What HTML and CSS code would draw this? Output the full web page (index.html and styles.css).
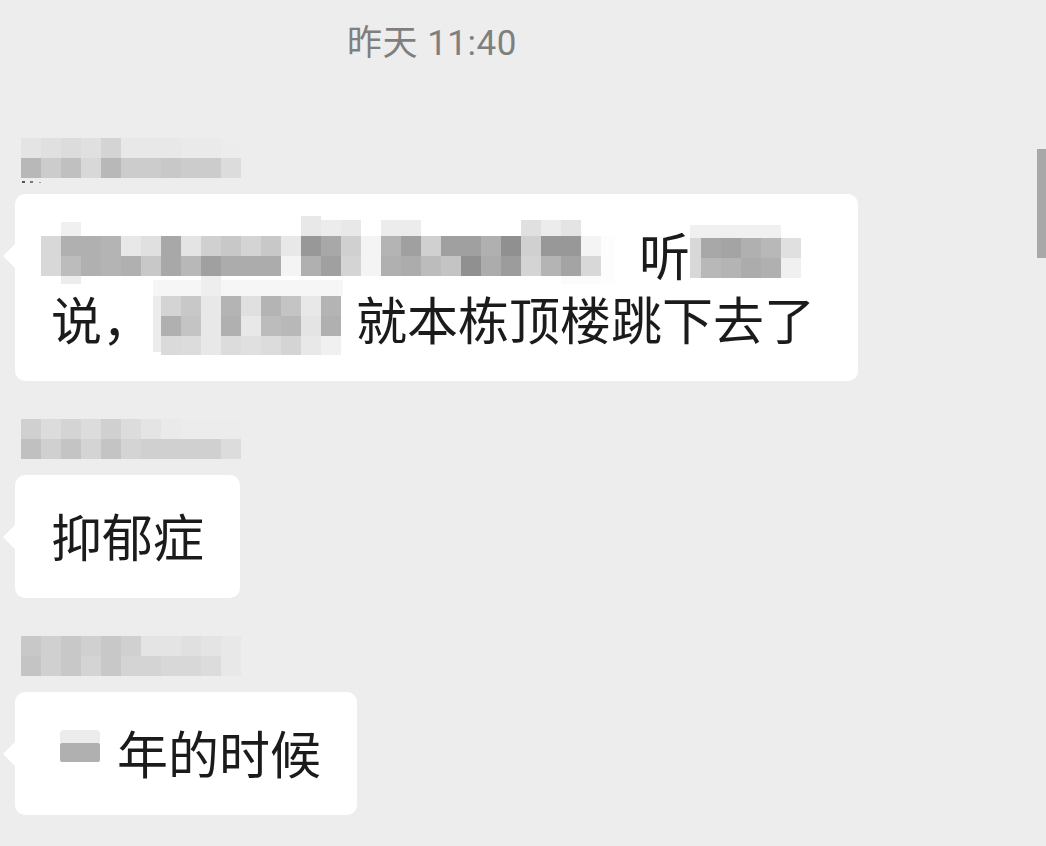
FILE: index.html
```html
<!DOCTYPE html>
<html lang="zh-CN">
<head>
<meta charset="utf-8">
<title>聊天记录</title>
<link rel="stylesheet" href="styles.css">
</head>
<body>
<div class="chat">
  <div class="time">昨天 11:40</div>

  <div class="msg">
    <svg class="name" width="220" height="46" viewBox="0 0 220 46">
      <rect x="0" y="0" width="20" height="20" fill="#e4e4e4"/><rect x="20" y="0" width="20" height="20" fill="#e0e0e0"/><rect x="40" y="0" width="20" height="20" fill="#dcdcdc"/><rect x="60" y="0" width="20" height="20" fill="#e0e0e0"/><rect x="80" y="0" width="20" height="20" fill="#d4d4d4"/><rect x="100" y="0" width="20" height="20" fill="#e8e8e8"/><rect x="120" y="0" width="20" height="20" fill="#e8e8e8"/><rect x="140" y="0" width="20" height="20" fill="#e8e8e8"/><rect x="160" y="0" width="20" height="20" fill="#eaeaea"/><rect x="180" y="0" width="20" height="20" fill="#eaeaea"/><rect x="200" y="0" width="20" height="20" fill="#ececec"/>
      <rect x="0" y="20" width="20" height="20" fill="#b8b8b8"/><rect x="20" y="20" width="20" height="20" fill="#cccccc"/><rect x="40" y="20" width="20" height="20" fill="#c0c0c0"/><rect x="60" y="20" width="20" height="20" fill="#d8d8d8"/><rect x="80" y="20" width="20" height="20" fill="#b8b8b8"/><rect x="100" y="20" width="20" height="20" fill="#cccccc"/><rect x="120" y="20" width="20" height="20" fill="#cccccc"/><rect x="140" y="20" width="20" height="20" fill="#c8c8c8"/><rect x="160" y="20" width="20" height="20" fill="#cccccc"/><rect x="180" y="20" width="20" height="20" fill="#cccccc"/><rect x="200" y="20" width="20" height="20" fill="#dcdcdc"/>
      <rect x="1" y="43" width="3" height="2" fill="#555"/><rect x="9" y="43" width="3" height="2" fill="#777"/><rect x="18" y="44" width="2" height="1" fill="#999"/>
    </svg>
    <div class="bubble long">
      <svg class="mz mz-a" width="574" height="68" viewBox="0 0 574 68">
        <rect x="20" y="6" width="20" height="14" fill="#f0f0f0"/><rect x="260" y="0" width="20" height="20" fill="#e8e8e8"/><rect x="280" y="4" width="20" height="16" fill="#ececec"/><rect x="300" y="4" width="20" height="16" fill="#e8e8e8"/><rect x="340" y="4" width="40" height="16" fill="#ececec"/><rect x="480" y="4" width="20" height="16" fill="#e0e0e0"/><rect x="500" y="4" width="20" height="16" fill="#ececec"/><rect x="520" y="4" width="20" height="16" fill="#e4e4e4"/>
        <rect x="0" y="20" width="20" height="20" fill="#d8d8d8"/><rect x="20" y="20" width="20" height="20" fill="#b0b0b0"/><rect x="40" y="20" width="20" height="20" fill="#b0b0b0"/><rect x="60" y="20" width="20" height="20" fill="#b4b4b4"/><rect x="80" y="20" width="20" height="20" fill="#e8e8e8"/><rect x="100" y="20" width="20" height="20" fill="#e0e0e0"/><rect x="120" y="20" width="20" height="20" fill="#a8a8a8"/><rect x="140" y="20" width="20" height="20" fill="#e4e4e4"/><rect x="160" y="20" width="20" height="20" fill="#d0d0d0"/><rect x="180" y="20" width="20" height="20" fill="#c8c8c8"/><rect x="200" y="20" width="20" height="20" fill="#d4d4d4"/><rect x="220" y="20" width="20" height="20" fill="#c8c8c8"/><rect x="240" y="20" width="20" height="20" fill="#e8e8e8"/><rect x="260" y="20" width="20" height="20" fill="#989898"/><rect x="280" y="20" width="20" height="20" fill="#a8a8a8"/><rect x="300" y="20" width="20" height="20" fill="#d0d0d0"/><rect x="320" y="20" width="20" height="20" fill="#f4f4f4"/><rect x="340" y="20" width="20" height="20" fill="#b4b4b4"/><rect x="360" y="20" width="20" height="20" fill="#a0a0a0"/><rect x="380" y="20" width="20" height="20" fill="#d0d0d0"/><rect x="400" y="20" width="20" height="20" fill="#a0a0a0"/><rect x="420" y="20" width="20" height="20" fill="#a0a0a0"/><rect x="440" y="20" width="20" height="20" fill="#b0b0b0"/><rect x="460" y="20" width="20" height="20" fill="#909090"/><rect x="480" y="20" width="20" height="20" fill="#d0d0d0"/><rect x="500" y="20" width="20" height="20" fill="#989898"/><rect x="520" y="20" width="20" height="20" fill="#989898"/><rect x="540" y="20" width="20" height="20" fill="#f4f4f4"/>
        <rect x="0" y="40" width="20" height="20" fill="#d8d8d8"/><rect x="20" y="40" width="20" height="20" fill="#bcbcbc"/><rect x="40" y="40" width="20" height="20" fill="#b0b0b0"/><rect x="60" y="40" width="20" height="20" fill="#b4b4b4"/><rect x="80" y="40" width="20" height="20" fill="#b0b0b0"/><rect x="100" y="40" width="20" height="20" fill="#c8c8c8"/><rect x="120" y="40" width="20" height="20" fill="#a8a8a8"/><rect x="140" y="40" width="20" height="20" fill="#b8b8b8"/><rect x="160" y="40" width="20" height="20" fill="#a0a0a0"/><rect x="180" y="40" width="20" height="20" fill="#acacac"/><rect x="200" y="40" width="20" height="20" fill="#acacac"/><rect x="220" y="40" width="20" height="20" fill="#acacac"/><rect x="240" y="40" width="20" height="20" fill="#f4f4f4"/><rect x="260" y="40" width="20" height="20" fill="#b0b0b0"/><rect x="280" y="40" width="20" height="20" fill="#a0a0a0"/><rect x="300" y="40" width="20" height="20" fill="#d4d4d4"/><rect x="320" y="40" width="20" height="20" fill="#f4f4f4"/><rect x="340" y="40" width="20" height="20" fill="#b0b0b0"/><rect x="360" y="40" width="20" height="20" fill="#acacac"/><rect x="380" y="40" width="20" height="20" fill="#bcbcbc"/><rect x="400" y="40" width="20" height="20" fill="#c4c4c4"/><rect x="420" y="40" width="20" height="20" fill="#909090"/><rect x="440" y="40" width="20" height="20" fill="#acacac"/><rect x="460" y="40" width="20" height="20" fill="#9c9c9c"/><rect x="480" y="40" width="20" height="20" fill="#d4d4d4"/><rect x="500" y="40" width="20" height="20" fill="#b4b4b4"/><rect x="520" y="40" width="20" height="20" fill="#a4a4a4"/><rect x="540" y="40" width="20" height="20" fill="#d8d8d8"/>
        <rect x="560" y="20" width="14" height="48" fill="#fdfdfd"/>
        <rect x="20" y="60" width="20" height="8" fill="#ececec"/><rect x="520" y="60" width="40" height="8" fill="#fbfbfb"/>
      </svg>，听<svg class="mz mz-b" width="113" height="53" viewBox="0 0 113 53">
        <rect x="0" y="0" width="91" height="13" fill="#f0f0f0"/>
        <rect x="0" y="13" width="11" height="40" fill="#d8d8d8"/>
        <rect x="11" y="13" width="20" height="20" fill="#a8a8a8"/><rect x="31" y="13" width="20" height="20" fill="#a4a4a4"/><rect x="51" y="13" width="20" height="20" fill="#b0b0b0"/><rect x="71" y="13" width="20" height="20" fill="#b8b8b8"/><rect x="91" y="13" width="20" height="20" fill="#e0e0e0"/>
        <rect x="11" y="33" width="20" height="20" fill="#b8b8b8"/><rect x="31" y="33" width="20" height="20" fill="#b4b4b4"/><rect x="51" y="33" width="20" height="20" fill="#acacac"/><rect x="71" y="33" width="20" height="20" fill="#b0b0b0"/><rect x="91" y="33" width="20" height="20" fill="#f0f0f0"/>
      </svg><br>说，<svg class="mz mz-c" width="203" height="80" viewBox="0 0 203 80">
        <rect x="0" y="4" width="190" height="16" fill="#f6f6f6"/><rect x="48" y="0" width="20" height="20" fill="#eeeeee"/>
        <rect x="0" y="20" width="8" height="56" fill="#ececec"/>
        <rect x="8" y="20" width="20" height="20" fill="#d4d4d4"/><rect x="28" y="20" width="20" height="20" fill="#c8c8c8"/><rect x="48" y="20" width="20" height="20" fill="#e8e8e8"/><rect x="68" y="20" width="20" height="20" fill="#b4b4b4"/><rect x="88" y="20" width="20" height="20" fill="#e0e0e0"/><rect x="108" y="20" width="20" height="20" fill="#b4b4b4"/><rect x="128" y="20" width="20" height="20" fill="#c4c4c4"/><rect x="148" y="20" width="20" height="20" fill="#e8e8e8"/><rect x="168" y="20" width="20" height="20" fill="#b4b4b4"/>
        <rect x="8" y="40" width="20" height="20" fill="#b0b0b0"/><rect x="28" y="40" width="20" height="20" fill="#c4c4c4"/><rect x="48" y="40" width="20" height="20" fill="#e8e8e8"/><rect x="68" y="40" width="20" height="20" fill="#b0b0b0"/><rect x="88" y="40" width="20" height="20" fill="#e8e8e8"/><rect x="108" y="40" width="20" height="20" fill="#bcbcbc"/><rect x="128" y="40" width="20" height="20" fill="#b8b8b8"/><rect x="148" y="40" width="20" height="20" fill="#e4e4e4"/><rect x="168" y="40" width="20" height="20" fill="#b0b0b0"/>
        <rect x="8" y="60" width="20" height="19" fill="#dadada"/><rect x="28" y="60" width="20" height="19" fill="#dcdcdc"/><rect x="48" y="60" width="20" height="19" fill="#e8e8e8"/><rect x="68" y="60" width="20" height="19" fill="#dcdcdc"/><rect x="88" y="60" width="20" height="19" fill="#e0e0e0"/><rect x="108" y="60" width="20" height="19" fill="#dcdcdc"/><rect x="128" y="60" width="20" height="19" fill="#d4d4d4"/><rect x="148" y="60" width="20" height="19" fill="#e8e8e8"/><rect x="168" y="60" width="20" height="19" fill="#f0f0f0"/>
      </svg>就本栋顶楼跳下去了
    </div>
  </div>

  <div class="msg">
    <svg class="name" width="220" height="40" viewBox="0 0 220 40">
      <rect x="0" y="0" width="20" height="20" fill="#d0d0d0"/><rect x="20" y="0" width="20" height="20" fill="#dcdcdc"/><rect x="40" y="0" width="20" height="20" fill="#d4d4d4"/><rect x="60" y="0" width="20" height="20" fill="#dcdcdc"/><rect x="80" y="0" width="20" height="20" fill="#d0d0d0"/><rect x="100" y="0" width="20" height="20" fill="#dcdcdc"/><rect x="120" y="0" width="20" height="20" fill="#e4e4e4"/><rect x="140" y="0" width="20" height="20" fill="#eaeaea"/><rect x="160" y="0" width="20" height="20" fill="#ececec"/><rect x="180" y="0" width="20" height="20" fill="#ececec"/><rect x="200" y="0" width="20" height="20" fill="#ececec"/>
      <rect x="0" y="20" width="20" height="20" fill="#c0c0c0"/><rect x="20" y="20" width="20" height="20" fill="#d0d0d0"/><rect x="40" y="20" width="20" height="20" fill="#c4c4c4"/><rect x="60" y="20" width="20" height="20" fill="#d4d4d4"/><rect x="80" y="20" width="20" height="20" fill="#c4c4c4"/><rect x="100" y="20" width="20" height="20" fill="#d4d4d4"/><rect x="120" y="20" width="20" height="20" fill="#d0d0d0"/><rect x="140" y="20" width="20" height="20" fill="#d0d0d0"/><rect x="160" y="20" width="20" height="20" fill="#d0d0d0"/><rect x="180" y="20" width="20" height="20" fill="#d0d0d0"/><rect x="200" y="20" width="20" height="20" fill="#dcdcdc"/>
    </svg>
    <div class="bubble">抑郁症</div>
  </div>

  <div class="msg">
    <svg class="name" width="220" height="40" viewBox="0 0 220 40">
      <rect x="0" y="0" width="20" height="20" fill="#c8c8c8"/><rect x="20" y="0" width="20" height="20" fill="#d0d0d0"/><rect x="40" y="0" width="20" height="20" fill="#c8c8c8"/><rect x="60" y="0" width="20" height="20" fill="#d0d0d0"/><rect x="80" y="0" width="20" height="20" fill="#c8c8c8"/><rect x="100" y="0" width="20" height="20" fill="#d0d0d0"/><rect x="120" y="0" width="20" height="20" fill="#e4e4e4"/><rect x="140" y="0" width="20" height="20" fill="#e4e4e4"/><rect x="160" y="0" width="20" height="20" fill="#e0e0e0"/><rect x="180" y="0" width="20" height="20" fill="#e4e4e4"/><rect x="200" y="0" width="20" height="20" fill="#e8e8e8"/>
      <rect x="0" y="20" width="20" height="20" fill="#c4c4c4"/><rect x="20" y="20" width="20" height="20" fill="#d0d0d0"/><rect x="40" y="20" width="20" height="20" fill="#c8c8c8"/><rect x="60" y="20" width="20" height="20" fill="#d4d4d4"/><rect x="80" y="20" width="20" height="20" fill="#c8c8c8"/><rect x="100" y="20" width="20" height="20" fill="#d4d4d4"/><rect x="120" y="20" width="20" height="20" fill="#d4d4d4"/><rect x="140" y="20" width="20" height="20" fill="#d8d8d8"/><rect x="160" y="20" width="20" height="20" fill="#d8d8d8"/><rect x="180" y="20" width="20" height="20" fill="#dcdcdc"/><rect x="200" y="20" width="20" height="20" fill="#e8e8e8"/>
    </svg>
    <div class="bubble"><svg class="mz mz-d" width="66" height="44" viewBox="0 0 66 44">
        <rect x="9" y="10" width="40" height="15" rx="4" fill="#ececec"/>
        <rect x="9" y="23" width="40" height="19" rx="2" fill="#b0b0b0"/>
      </svg>年的时候</div>
  </div>
</div>
<div class="scrollbar"></div>
</body>
</html>
```

FILE: styles.css
```css
html, body {
  margin: 0;
  padding: 0;
}

body {
  width: 1046px;
  height: 846px;
  overflow: hidden;
  position: relative;
  background: #ededed;
  font-family: "Noto Sans CJK SC", "Noto Sans", sans-serif;
}

.chat {
  display: flex;
  flex-direction: column;
  padding: 19px 0 0 15px;
}

.time {
  font-family: Roboto, "Noto Sans CJK SC", sans-serif;
  font-size: 35px;
  line-height: 50px;
  letter-spacing: 0.5px;
  color: #7f7f7f;
  padding-left: 332px;
  margin-bottom: 69px;
}

.msg {
  display: flex;
  flex-direction: column;
  align-items: flex-start;
  gap: 16px;
}

.msg + .msg {
  margin-top: 38px;
}

.name {
  display: block;
  margin-left: 6px;
  margin-bottom: -6px;
}

.msg .name[height="40"] {
  margin-bottom: 0;
}

.bubble {
  position: relative;
  background: #ffffff;
  border-radius: 10px;
  padding: 28px 36px 31px;
  font-size: 51px;
  line-height: 64px;
  color: #1b1b1b;
  white-space: nowrap;
}

.bubble::before {
  content: "";
  position: absolute;
  left: -12px;
  top: 50px;
  width: 0;
  height: 0;
  border-top: 12px solid transparent;
  border-bottom: 12px solid transparent;
  border-right: 12px solid #ffffff;
}

.bubble.long {
  width: 843px;
  box-sizing: border-box;
}

.mz {
  display: inline-block;
  vertical-align: top;
  position: relative;
  z-index: 1;
}

.mz-a {
  margin: -6px -27px 0 -10px;
}

.mz-b {
  margin-top: 3px;
}

.mz-c {
  margin: -10px 0 -6px 0;
}

.mz-d {
  margin-top: 0;
}

.scrollbar {
  position: absolute;
  right: 0;
  top: 149px;
  width: 9px;
  height: 109px;
  background: #a8a8a8;
}
```
